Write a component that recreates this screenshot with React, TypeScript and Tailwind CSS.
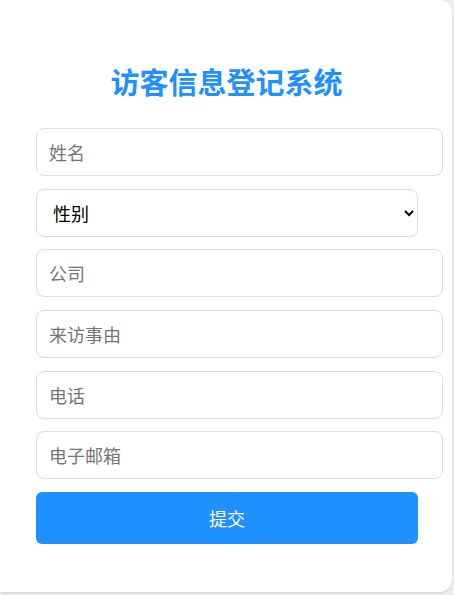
export default function App() {
  const fields = ["公司", "来访事由", "电话", "电子邮箱"];
  const inputCls =
    "block h-[48px] w-[407px] rounded-lg border border-[#dddddd] bg-white px-3 text-[18px] text-black placeholder:text-[#757575] outline-none";

  return (
    <div
      className="min-h-screen bg-[#eeeeee]"
      style={{ fontFamily: '"Noto Sans CJK SC", "Noto Sans", sans-serif' }}
    >
      <div className="w-[452px] h-[592px] rounded-r-xl bg-white pl-9 pt-[61px] shadow-sm">
        <h2 className="w-[381px] text-center text-[29px] leading-[40px] font-bold text-[#1e90ff]">
          访客信息登记系统
        </h2>
        <form className="mt-[27px] flex flex-col gap-[12.7px]" onSubmit={(e) => e.preventDefault()}>
          <input className={inputCls} placeholder="姓名" />
          <select className="block h-[48px] w-[382px] rounded-lg border border-[#dddddd] bg-white px-3 text-[18px] text-black outline-none">
            <option>性别</option>
            <option>男</option>
            <option>女</option>
          </select>
          {fields.map((f) => (
            <input key={f} className={inputCls} placeholder={f} />
          ))}
          <button
            type="submit"
            className="h-[52px] w-[382px] rounded-md bg-[#1e90ff] text-[18px] text-white"
          >
            提交
          </button>
        </form>
      </div>
    </div>
  );
}
